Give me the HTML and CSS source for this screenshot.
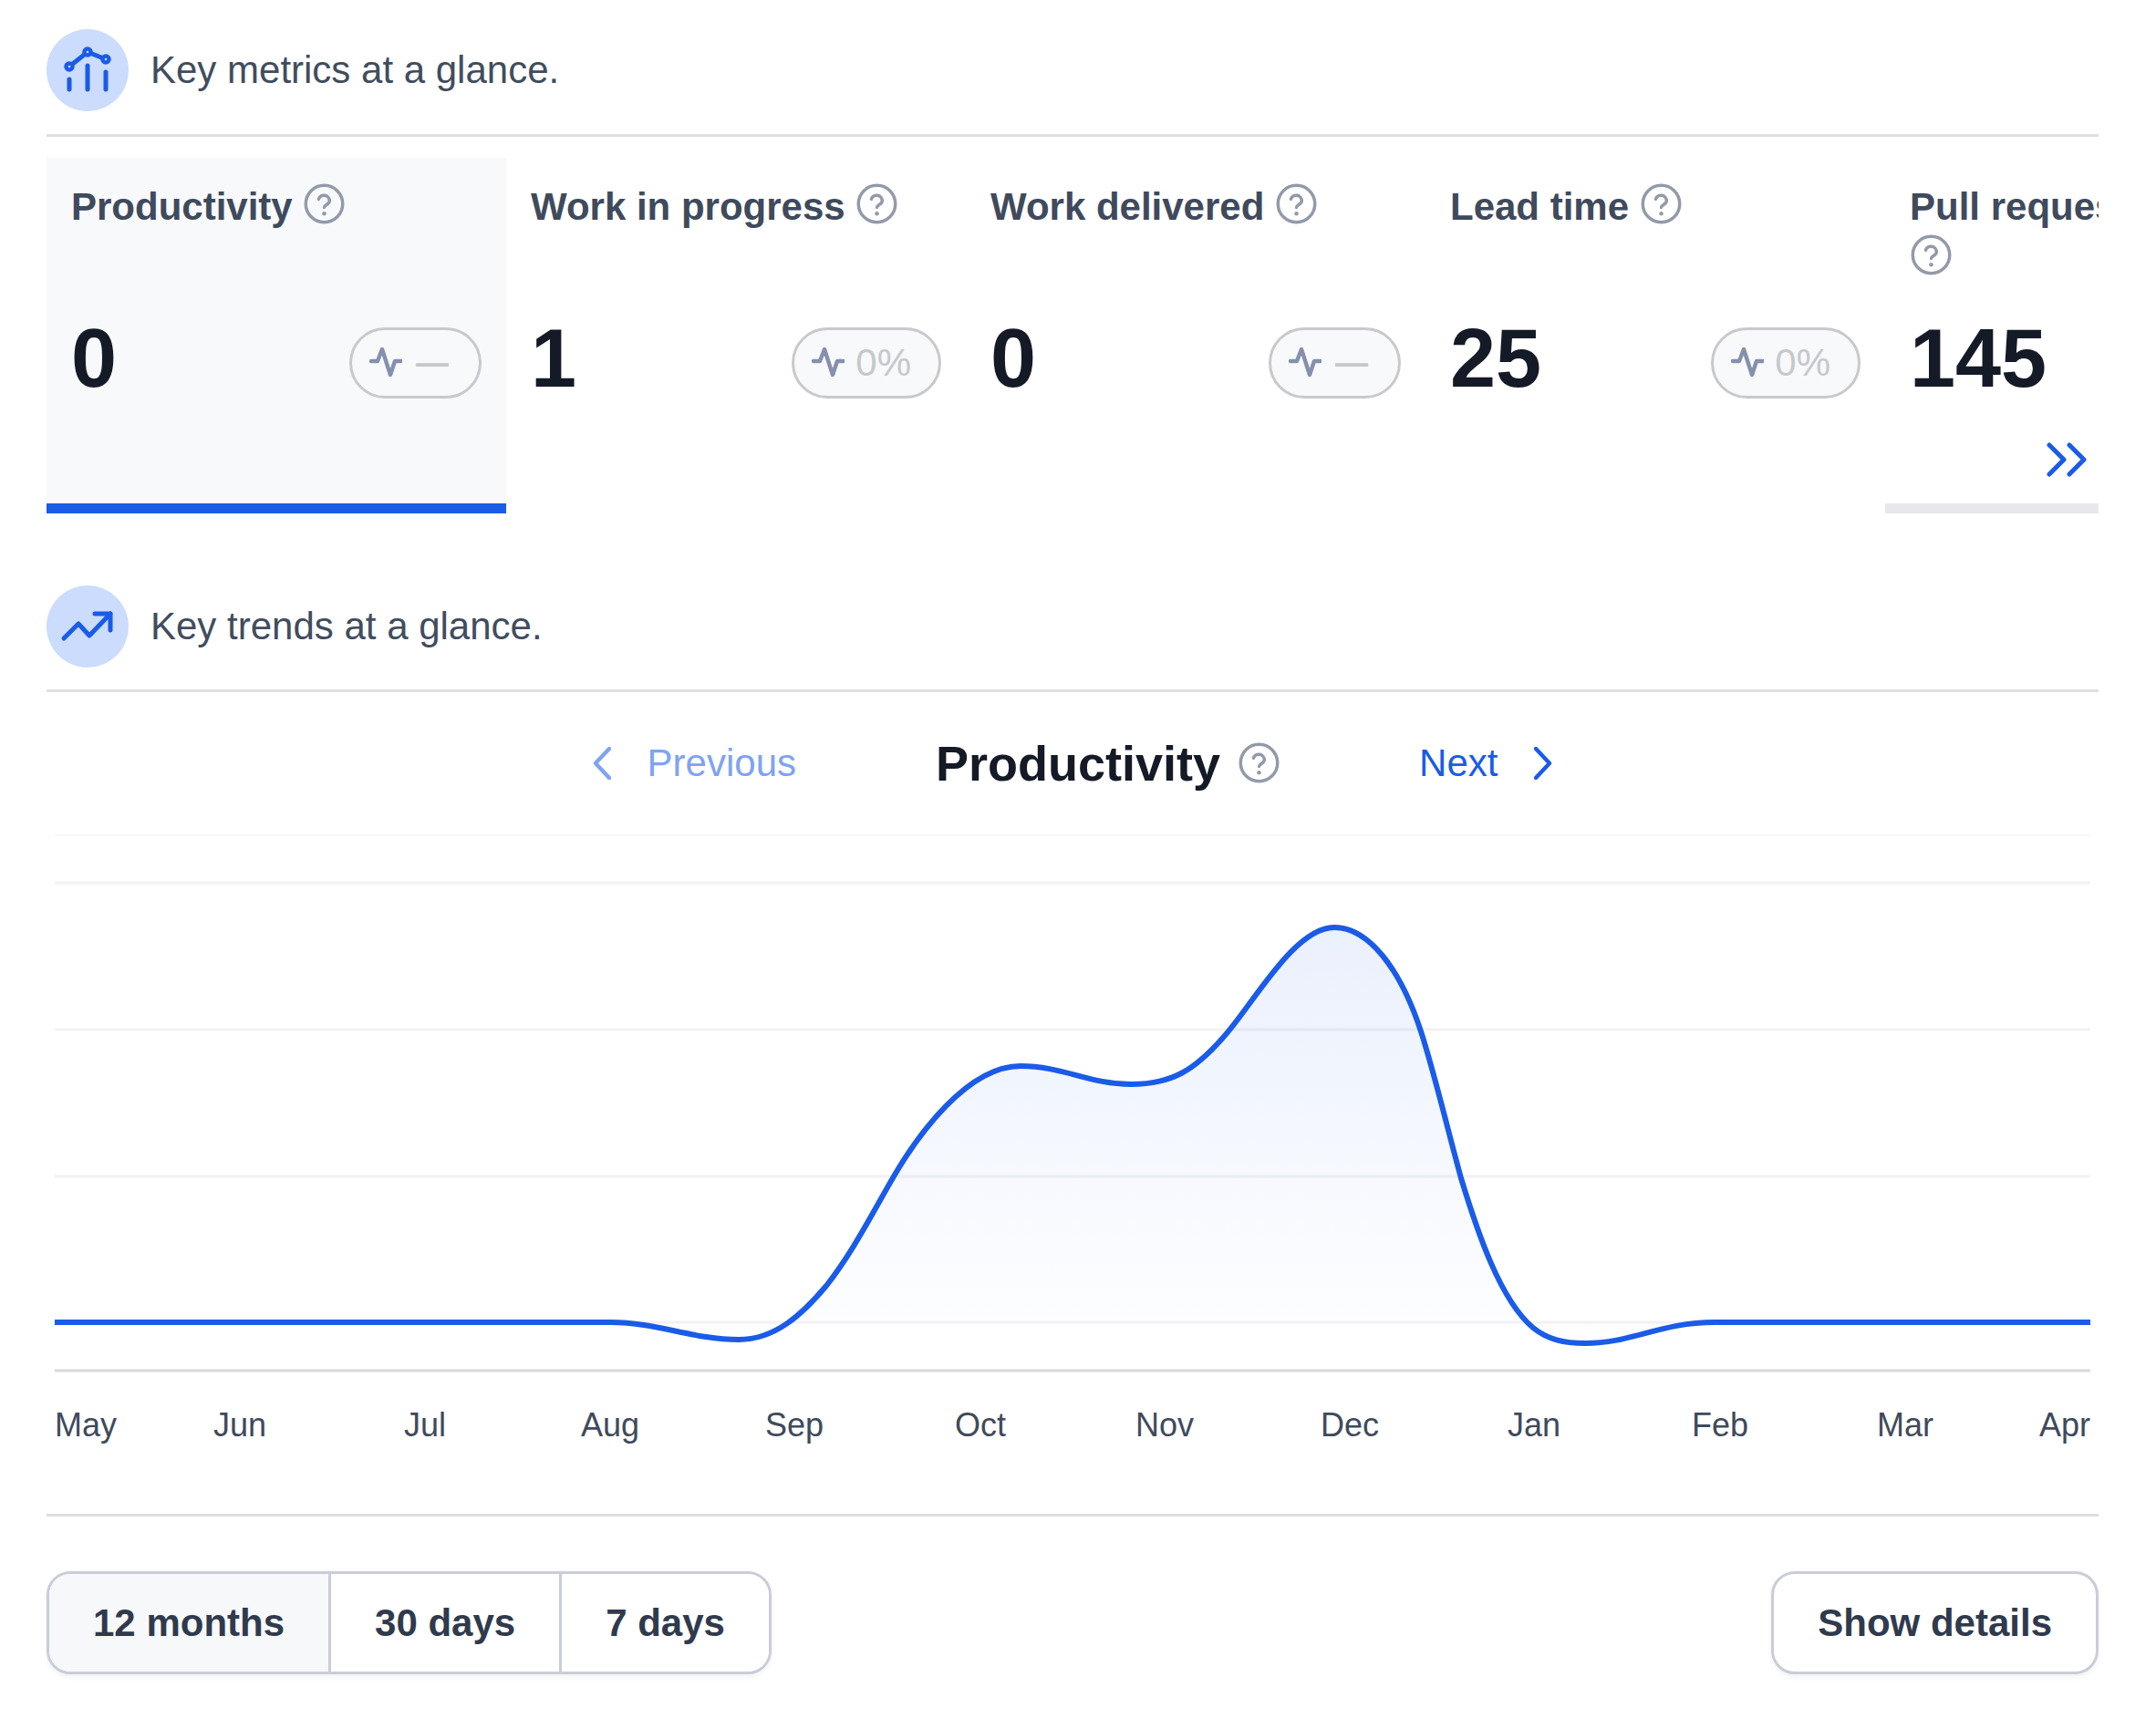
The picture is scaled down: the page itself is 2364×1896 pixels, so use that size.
FILE: index.html
```html
<!DOCTYPE html>
<html lang="en">
<head>
<meta charset="UTF-8">
<meta name="viewport" content="width=device-width, initial-scale=1.0">
<title>Key metrics</title>
<link rel="stylesheet" href="styles.css">
</head>
<body>
<svg class="sprite" aria-hidden="true">
    <symbol id="help" viewBox="0 0 44 44">
        <circle cx="22" cy="22" r="19.8" fill="none" stroke="currentColor" stroke-width="3.4"/>
        <path d="M16 17a6 6 0 0 1 11.7 1.8c0 3.8-5.7 4.4-5.7 7" fill="none" stroke="currentColor" stroke-width="3.4" stroke-linecap="round"/>
        <circle cx="22" cy="32.5" r="2.2" fill="currentColor"/>
    </symbol>
    <symbol id="pulse" viewBox="0 0 36 32">
        <path d="M2 15h7l5-13 9 28 5-15h7" fill="none" stroke="currentColor" stroke-width="4.4" stroke-linecap="round" stroke-linejoin="round"/>
    </symbol>
</svg>

<main class="page">
    <header class="heading">
        <span class="heading-icon">
            <svg width="90" height="90" viewBox="0 0 90 90" fill="none" stroke="#1a5be8" stroke-width="5" stroke-linecap="round">
                <path d="M25 41 45 25 65 33"/>
                <circle cx="25" cy="41" r="3.5" fill="#cbdcfd" stroke-width="4.5"/>
                <circle cx="45" cy="25" r="3.5" fill="#cbdcfd" stroke-width="4.5"/>
                <circle cx="65" cy="33" r="3.5" fill="#cbdcfd" stroke-width="4.5"/>
                <path d="M25 55v11M45 40v26M65 47v19"/>
            </svg>
        </span>
        <span>Key metrics at a glance.</span>
    </header>

    <section class="tabs">
        <div class="tab tab-active">
            <div class="tab-label"><span class="tab-name">Productivity</span> <svg class="help"><use href="#help"/></svg></div>
            <div class="tab-row">
                <span class="tab-value">0</span>
                <span class="pill"><svg class="pulse"><use href="#pulse"/></svg><span class="pill-dash">—</span></span>
            </div>
        </div>
        <div class="tab">
            <div class="tab-label"><span class="tab-name">Work in progress</span> <svg class="help"><use href="#help"/></svg></div>
            <div class="tab-row">
                <span class="tab-value">1</span>
                <span class="pill pill-filled"><svg class="pulse"><use href="#pulse"/></svg><span>0%</span></span>
            </div>
        </div>
        <div class="tab">
            <div class="tab-label"><span class="tab-name">Work delivered</span> <svg class="help"><use href="#help"/></svg></div>
            <div class="tab-row">
                <span class="tab-value">0</span>
                <span class="pill pill-filled"><svg class="pulse"><use href="#pulse"/></svg><span class="pill-dash">—</span></span>
            </div>
        </div>
        <div class="tab">
            <div class="tab-label"><span class="tab-name">Lead time</span> <svg class="help"><use href="#help"/></svg></div>
            <div class="tab-row">
                <span class="tab-value">25</span>
                <span class="pill pill-filled"><svg class="pulse"><use href="#pulse"/></svg><span>0%</span></span>
            </div>
        </div>
        <div class="tab tab-last">
            <div class="tab-label"><span class="tab-name">Pull requests</span> <svg class="help"><use href="#help"/></svg></div>
            <div class="tab-row">
                <span class="tab-value">145</span>
            </div>
            <svg class="more" width="44" height="38" viewBox="0 0 44 38" fill="none" stroke="#1a5be8" stroke-width="5" stroke-linecap="round" stroke-linejoin="round">
                <path d="M3 3 19 19 3 35M25 3 41 19 25 35"/>
            </svg>
        </div>
    </section>

    <header class="heading heading-trends">
        <span class="heading-icon">
            <svg width="90" height="90" viewBox="0 0 90 90" fill="none" stroke="#1a5be8" stroke-width="5" stroke-linecap="round" stroke-linejoin="round">
                <path d="M19 58 35 42 47 55 70 31"/>
                <path d="M53 31H70V49"/>
            </svg>
        </span>
        <span>Key trends at a glance.</span>
    </header>

    <nav class="pager">
        <a class="pager-link pager-off">
            <svg width="20" height="36" viewBox="0 0 20 36" fill="none" stroke="currentColor" stroke-width="4.4" stroke-linecap="round" stroke-linejoin="round"><path d="M18 2 3 18 18 34"/></svg>
            <span>Previous</span>
        </a>
        <div class="pager-title"><span>Productivity</span><svg class="help help-big"><use href="#help"/></svg></div>
        <a class="pager-link">
            <span>Next</span>
            <svg width="20" height="36" viewBox="0 0 20 36" fill="none" stroke="currentColor" stroke-width="4.4" stroke-linecap="round" stroke-linejoin="round"><path d="M2 2 17 18 2 34"/></svg>
        </a>
    </nav>

    <svg class="chart" width="2250" height="759" viewBox="51 900 2250 759">
        <defs>
            <linearGradient id="areaFill" gradientUnits="userSpaceOnUse" x1="0" y1="1016" x2="0" y2="1470">
                <stop offset="0" stop-color="#1a5be8" stop-opacity="0.09"/>
                <stop offset="1" stop-color="#1a5be8" stop-opacity="0.005"/>
            </linearGradient>
        </defs>
        <path class="grid grid-top" d="M60 915H2292"/>
        <path class="grid" d="M60 967H2292M60 1128H2292M60 1289H2292M60 1449H2292"/>
        <path class="axis" d="M60 1502H2292"/>
        <path class="area" d="M670 1449C720 1449 760 1468 810 1468C850 1468 880 1440 906 1409C935 1372 955 1332 980 1289C1005 1246 1060 1168 1119 1168C1165 1168 1195 1188 1240 1188C1285 1188 1310 1172 1340 1138C1372 1104 1418 1016 1463 1016C1500 1016 1535 1060 1558 1130C1572 1173 1588 1240 1602 1291C1620 1350 1645 1425 1681 1455C1697 1468 1715 1472 1738 1472C1790 1472 1820 1449 1880 1449Z"/>
        <path class="line" d="M60 1449H670C720 1449 760 1468 810 1468C850 1468 880 1440 906 1409C935 1372 955 1332 980 1289C1005 1246 1060 1168 1119 1168C1165 1168 1195 1188 1240 1188C1285 1188 1310 1172 1340 1138C1372 1104 1418 1016 1463 1016C1500 1016 1535 1060 1558 1130C1572 1173 1588 1240 1602 1291C1620 1350 1645 1425 1681 1455C1697 1468 1715 1472 1738 1472C1790 1472 1820 1449 1880 1449H2292"/>
        <g class="months">
            <text x="60" y="1574" class="month-first">May</text>
            <text x="263" y="1574">Jun</text>
            <text x="466" y="1574">Jul</text>
            <text x="669" y="1574">Aug</text>
            <text x="871" y="1574">Sep</text>
            <text x="1075" y="1574">Oct</text>
            <text x="1277" y="1574">Nov</text>
            <text x="1480" y="1574">Dec</text>
            <text x="1682" y="1574">Jan</text>
            <text x="1886" y="1574">Feb</text>
            <text x="2089" y="1574">Mar</text>
            <text x="2292" y="1574" class="month-last">Apr</text>
        </g>
    </svg>

    <footer class="footer">
        <div class="range">
            <button class="range-btn range-active">12 months</button>
            <button class="range-btn">30 days</button>
            <button class="range-btn">7 days</button>
        </div>
        <button class="details-btn">Show details</button>
    </footer>
</main>
</body>
</html>
```

FILE: styles.css
```css
body {
    margin: 0;
    background-color: #fff;
    font-family: "Liberation Sans", Arial, sans-serif;
    color: #414d5e;
}
.sprite {
    display: none;
}
.page {
    width: 2250px;
    padding: 32px 63px 61px 51px;
}

/* section headings */
.heading {
    display: flex;
    align-items: center;
    gap: 24px;
    padding-bottom: 25px;
    border-bottom: 3px solid #dedfe1;
    font-size: 42px;
}
.heading-icon {
    display: block;
    width: 90px;
    height: 90px;
    border-radius: 50%;
    background-color: #cbdcfd;
}
.heading-icon svg {
    display: block;
}
.heading-trends {
    margin-top: 79px;
    padding-bottom: 24px;
}

/* metric tabs */
.tabs {
    display: flex;
    margin-top: 23px;
}
.tab {
    flex: 0 0 504px;
    box-sizing: border-box;
    height: 390px;
    padding: 26px 27px 0;
    border-bottom: 11px solid transparent;
}
.tab-active {
    background-color: #f8f9fb;
    border-bottom-color: #1a5be8;
}
.tab-last {
    flex: 1 1 0;
    min-width: 0;
    overflow: hidden;
    display: flex;
    flex-direction: column;
    border-bottom-color: #e7e8ec;
}
.tab-label {
    min-height: 112px;
    font-size: 42px;
    line-height: 56px;
    font-weight: 700;
    color: #3f4a5c;
}
.tab-name {
    white-space: nowrap;
}
.help {
    width: 45px;
    height: 45px;
    margin-left: 1px;
    color: #929aaa;
    vertical-align: -5px;
}
.help-big {
    margin-left: 20px;
    vertical-align: 0;
}
.tab-row {
    display: flex;
    align-items: center;
    justify-content: space-between;
    height: 78px;
    margin-top: 46px;
}
.tab-value {
    margin-top: -5px;
    font-size: 90px;
    font-weight: 700;
    color: #141a26;
}
.pill {
    display: flex;
    align-items: center;
    box-sizing: border-box;
    height: 78px;
    margin-top: 4px;
    padding: 0 30px 0 19px;
    border: 3px solid #c8c9cc;
    border-radius: 39px;
    font-size: 42px;
    color: #c6c8cc;
}
.pill-filled {
    background-color: #f8f9fb;
}
.pulse {
    width: 36px;
    height: 32px;
    margin: -2px 12px 0 0;
    color: #8490ad;
}
.pill-dash {
    margin: 0 3px;
    font-size: 36px;
    font-weight: 700;
}
.more {
    align-self: flex-end;
    margin: 50px -14px 0 0;
}

/* previous / next */
.pager {
    display: flex;
    justify-content: center;
    align-items: center;
    gap: 153px;
    height: 63px;
    padding: 46px 0 33px;
}
.pager-link {
    display: flex;
    align-items: center;
    gap: 40px;
    font-size: 42px;
    color: #1a5be8;
}
.pager-off {
    color: #7ea3f3;
}
.pager-title {
    display: flex;
    align-items: center;
    font-size: 54px;
    font-weight: 700;
    color: #141a26;
}

/* trend chart */
.chart {
    display: block;
}
.grid {
    fill: none;
    stroke: #f2f2f6;
    stroke-width: 3;
}
.grid-top {
    stroke: #f6f6f8;
    stroke-width: 2;
}
.axis {
    fill: none;
    stroke: #d9dade;
    stroke-width: 3;
}
.area {
    fill: url(#areaFill);
}
.line {
    fill: none;
    stroke: #1a5be8;
    stroke-width: 6;
}
.months text {
    font-size: 36px;
    fill: #3f4a5c;
    text-anchor: middle;
}
.months .month-first {
    text-anchor: start;
}
.months .month-last {
    text-anchor: end;
}

/* footer buttons */
.footer {
    display: flex;
    justify-content: space-between;
    padding-top: 60px;
    border-top: 3px solid #dedfe1;
}
.range {
    display: flex;
    height: 113px;
    box-sizing: border-box;
    border: 3px solid #c9cdd8;
    border-radius: 26px;
    overflow: hidden;
    box-shadow: 0 3px 5px rgba(20, 26, 38, 0.06);
}
.range-btn,
.details-btn {
    padding: 0 48px;
    background-color: #fff;
    border: none;
    font-family: inherit;
    font-size: 42px;
    font-weight: 700;
    color: #2f3a4d;
}
.range-btn + .range-btn {
    border-left: 3px solid #c9cdd8;
}
.range-active {
    background-color: #f7f8fa;
}
.details-btn {
    height: 113px;
    box-sizing: border-box;
    border: 3px solid #c9cdd8;
    border-radius: 26px;
    box-shadow: 0 3px 5px rgba(20, 26, 38, 0.06);
}
```
